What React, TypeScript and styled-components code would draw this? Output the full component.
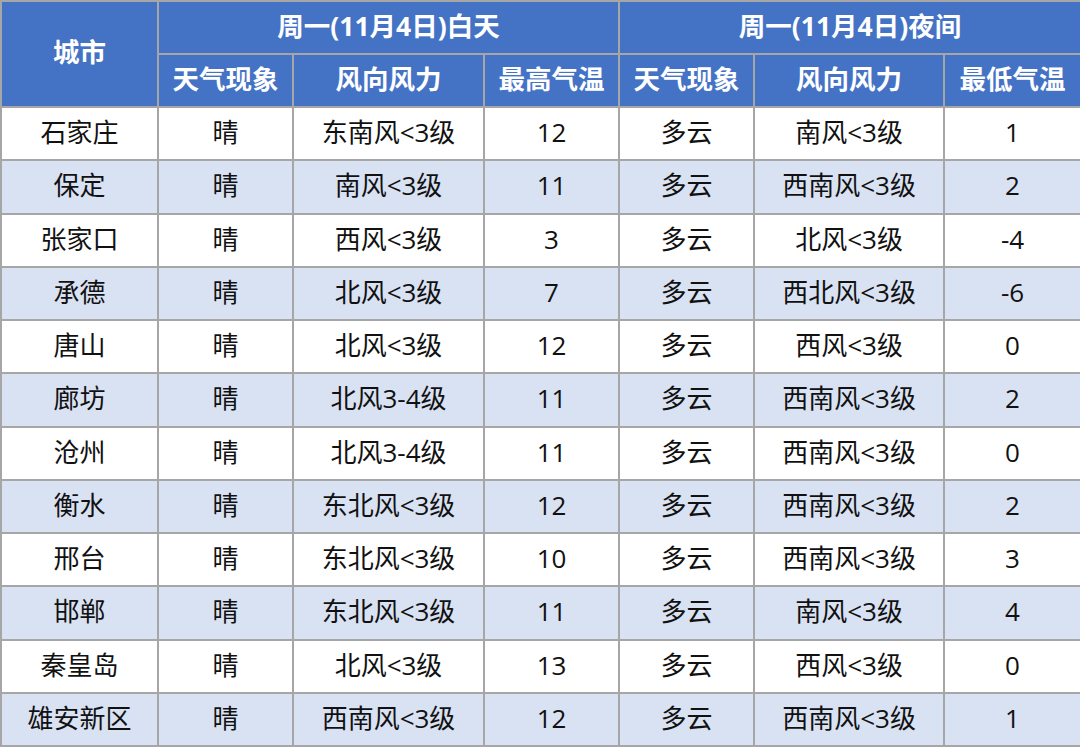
import React from 'react'
import styled, { createGlobalStyle } from 'styled-components'

const GlobalStyle = createGlobalStyle`
  html, body {
    margin: 0;
    padding: 0;
    background: #ffffff;
  }
  body {
    font-family: "Open Sans", "Noto Sans CJK SC", sans-serif;
  }
`

const Table = styled.table`
  width: 1080px;
  height: 747px;
  border-collapse: collapse;
  table-layout: fixed;
  border: 2px solid #a6a6a6;
`

const Row = styled.tr<{ $shaded?: boolean }>`
  height: 53px;
  background: ${(p) => (p.$shaded ? '#d9e2f3' : '#ffffff')};
`

const HeadCell = styled.th`
  background: #4472c4;
  color: #ffffff;
  font-size: 26.5px;
  font-weight: 700;
  text-align: center;
  vertical-align: middle;
  border: 2px solid #a6a6a6;
  padding: 0 0 3px;
  line-height: 1;
  white-space: nowrap;
`

const Cell = styled.td`
  color: #111111;
  font-size: 26px;
  font-weight: 400;
  text-align: center;
  vertical-align: middle;
  border: 2px solid #a6a6a6;
  padding: 0 0 3px;
  line-height: 1;
  white-space: nowrap;
`

type Forecast = {
  city: string
  dayWeather: string
  dayWind: string
  high: number
  nightWeather: string
  nightWind: string
  low: number
}

const rows: Forecast[] = [
  { city: '石家庄', dayWeather: '晴', dayWind: '东南风<3级', high: 12, nightWeather: '多云', nightWind: '南风<3级', low: 1 },
  { city: '保定', dayWeather: '晴', dayWind: '南风<3级', high: 11, nightWeather: '多云', nightWind: '西南风<3级', low: 2 },
  { city: '张家口', dayWeather: '晴', dayWind: '西风<3级', high: 3, nightWeather: '多云', nightWind: '北风<3级', low: -4 },
  { city: '承德', dayWeather: '晴', dayWind: '北风<3级', high: 7, nightWeather: '多云', nightWind: '西北风<3级', low: -6 },
  { city: '唐山', dayWeather: '晴', dayWind: '北风<3级', high: 12, nightWeather: '多云', nightWind: '西风<3级', low: 0 },
  { city: '廊坊', dayWeather: '晴', dayWind: '北风3-4级', high: 11, nightWeather: '多云', nightWind: '西南风<3级', low: 2 },
  { city: '沧州', dayWeather: '晴', dayWind: '北风3-4级', high: 11, nightWeather: '多云', nightWind: '西南风<3级', low: 0 },
  { city: '衡水', dayWeather: '晴', dayWind: '东北风<3级', high: 12, nightWeather: '多云', nightWind: '西南风<3级', low: 2 },
  { city: '邢台', dayWeather: '晴', dayWind: '东北风<3级', high: 10, nightWeather: '多云', nightWind: '西南风<3级', low: 3 },
  { city: '邯郸', dayWeather: '晴', dayWind: '东北风<3级', high: 11, nightWeather: '多云', nightWind: '南风<3级', low: 4 },
  { city: '秦皇岛', dayWeather: '晴', dayWind: '北风<3级', high: 13, nightWeather: '多云', nightWind: '西风<3级', low: 0 },
  { city: '雄安新区', dayWeather: '晴', dayWind: '西南风<3级', high: 12, nightWeather: '多云', nightWind: '西南风<3级', low: 1 },
]

const widths = [157, 135, 191, 135, 135, 190, 137]

export default function App() {
  return (
    <>
      <GlobalStyle />
      <Table>
        <colgroup>
          {widths.map((w, i) => (
            <col key={i} style={{ width: w }} />
          ))}
        </colgroup>
        <thead>
          <Row>
            <HeadCell rowSpan={2}>城市</HeadCell>
            <HeadCell colSpan={3}>周一(11月4日)白天</HeadCell>
            <HeadCell colSpan={3}>周一(11月4日)夜间</HeadCell>
          </Row>
          <Row>
            <HeadCell>天气现象</HeadCell>
            <HeadCell>风向风力</HeadCell>
            <HeadCell>最高气温</HeadCell>
            <HeadCell>天气现象</HeadCell>
            <HeadCell>风向风力</HeadCell>
            <HeadCell>最低气温</HeadCell>
          </Row>
        </thead>
        <tbody>
          {rows.map((r, i) => (
            <Row key={r.city} $shaded={i % 2 === 1}>
              <Cell>{r.city}</Cell>
              <Cell>{r.dayWeather}</Cell>
              <Cell>{r.dayWind}</Cell>
              <Cell>{r.high}</Cell>
              <Cell>{r.nightWeather}</Cell>
              <Cell>{r.nightWind}</Cell>
              <Cell>{r.low}</Cell>
            </Row>
          ))}
        </tbody>
      </Table>
    </>
  )
}
